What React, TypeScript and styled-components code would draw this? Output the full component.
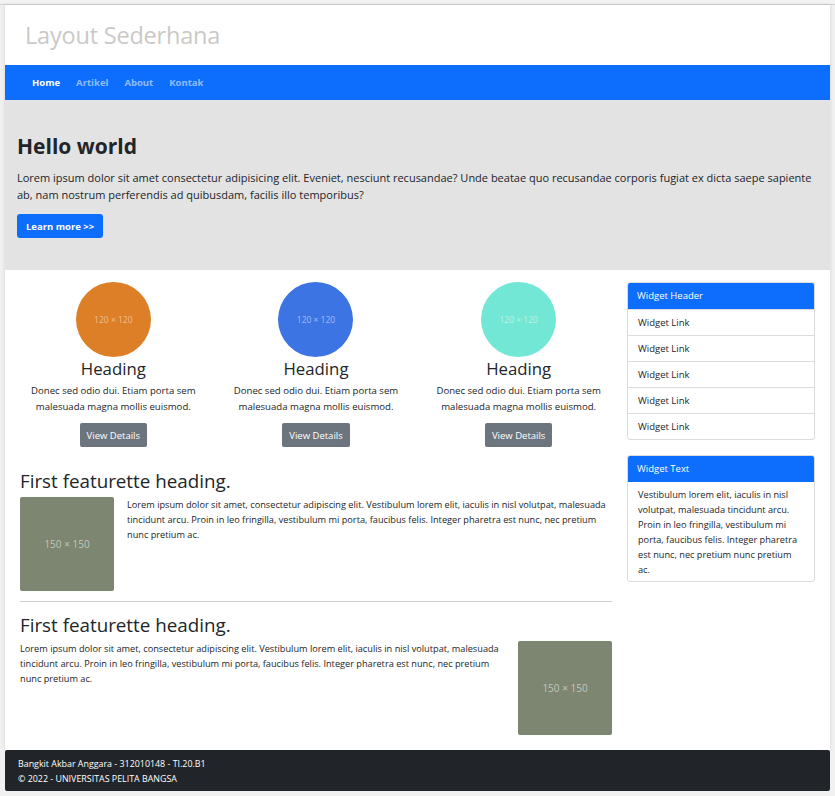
import React from "react";
import styled, { createGlobalStyle } from "styled-components";

const Global = createGlobalStyle`
  html, body { margin: 0; padding: 0; background: #f1f1f1; }
  body { font-family: "Open Sans", "Noto Sans", sans-serif; color: #212529; }
  * { box-sizing: border-box; }
`;

const TopLine = styled.div`
  height: 5px;
  border-bottom: 1px solid #d2d2d2;
  background: #f3f3f3;
`;

const Frame = styled.div`
  margin: 0 5px;
  background: #fff;
  box-shadow: 0 0 4px rgba(0, 0, 0, 0.12);
`;

const Header = styled.header`
  height: 60px;
  display: flex;
  align-items: center;
  padding-left: 20px;
`;

const Title = styled.h1`
  margin: 0;
  font-size: 23.5px;
  font-weight: 400;
  color: #cbc9c7;
  letter-spacing: -0.2px;
`;

const Nav = styled.nav`
  height: 35px;
  background: #0d6efd;
  display: flex;
  align-items: center;
  padding-left: 22px;
`;

const NavLink = styled.a<{ $active?: boolean }>`
  font-size: 9.5px;
  font-weight: 700;
  padding: 0 8px 0 5px;
  margin-right: 3px;
  color: ${(p) => (p.$active ? "#fff" : "rgba(255,255,255,0.55)")};
  text-decoration: none;
`;

const Jumbo = styled.section`
  background: #e3e3e3;
  height: 170px;
  padding: 32px 12px 0;
`;

const JumboTitle = styled.h2`
  margin: 0;
  font-size: 21px;
  font-weight: 700;
  line-height: 28px;
  color: #212529;
`;

const JumboText = styled.p`
  margin: 9px 0 0;
  font-size: 11px;
  line-height: 17px;
  font-weight: 500;
  color: #212529;
`;

const PrimaryButton = styled.button`
  margin-top: 11px;
  background: #0d6efd;
  color: #fff;
  border: none;
  border-radius: 3px;
  height: 24px;
  padding: 0 9px;
  font-family: inherit;
  font-size: 9.5px;
  font-weight: 700;
`;

const Main = styled.div`
  display: flex;
  gap: 15px;
  padding: 12px 15px 15px 15px;
`;

const Content = styled.div`
  width: 592px;
  flex: none;
`;

const Cards = styled.div`
  display: grid;
  grid-template-columns: repeat(3, 1fr);
  margin: 0 -8px;
`;

const Card = styled.div`
  display: flex;
  flex-direction: column;
  align-items: center;
  text-align: center;
`;

const Circle = styled.div<{ $bg: string }>`
  width: 75px;
  height: 75px;
  border-radius: 50%;
  background: ${(p) => p.$bg};
  display: flex;
  align-items: center;
  justify-content: center;
  color: rgba(255, 255, 255, 0.5);
  font-size: 8.5px;
`;

const CardTitle = styled.h3`
  margin: 0;
  font-size: 16.8px;
  font-weight: 400;
  line-height: 23px;
`;

const CardText = styled.p`
  margin: 3px 0 0;
  font-size: 9.6px;
  line-height: 16px;
  padding: 0 14px;
`;

const GrayButton = styled.button`
  margin-top: 8px;
  height: 24px;
  padding: 0 7px;
  background: #6c757d;
  color: #fff;
  border: none;
  border-radius: 2px;
  font-family: inherit;
  font-size: 9.5px;
`;

const Feature = styled.div<{ $withRule?: boolean }>`
  padding-bottom: ${(p) => (p.$withRule ? "10px" : "0")};
  border-bottom: ${(p) => (p.$withRule ? "1px solid #cfcfcf" : "none")};
  margin-top: ${(p) => (p.$withRule ? "22px" : "11px")};
`;

const FeatureTitle = styled.h2`
  margin: 0 0 3px;
  font-size: 18.8px;
  font-weight: 400;
  line-height: 25px;
`;

const FeatureBody = styled.div<{ $reverse?: boolean }>`
  display: flex;
  gap: 13px;
  flex-direction: ${(p) => (p.$reverse ? "row-reverse" : "row")};
  align-items: flex-start;
`;

const Placeholder = styled.div`
  width: 94px;
  height: 94px;
  flex: none;
  background: #7c8670;
  border-radius: 2px;
  color: rgba(255, 255, 255, 0.55);
  font-size: 10px;
  display: flex;
  align-items: center;
  justify-content: center;
`;

const FeatureText = styled.p`
  margin: 0;
  font-size: 9.2px;
  line-height: 15px;
  flex: 1;
`;

const Sidebar = styled.aside`
  width: 188px;
  flex: none;
  display: flex;
  flex-direction: column;
  gap: 15px;
`;

const Widget = styled.div`
  border: 1px solid #dcdcdc;
  border-radius: 3px;
  overflow: hidden;
`;

const WidgetHead = styled.div`
  height: 27px;
  background: #0d6efd;
  color: #fff;
  font-size: 9.5px;
  display: flex;
  align-items: center;
  padding-left: 10px;
  margin: -1px -1px 0;
`;

const WidgetLink = styled.div`
  height: 26px;
  display: flex;
  align-items: center;
  padding-left: 10px;
  font-size: 9.5px;
  border-top: 1px solid #dcdcdc;
  &:first-of-type { border-top: none; }
`;

const WidgetBody = styled.p`
  margin: 0;
  padding: 5px 10px 4px;
  font-size: 9.2px;
  line-height: 15px;
`;

const Footer = styled.footer`
  margin: 0 5px;
  height: 41px;
  background: #212529;
  border-radius: 2px;
  color: #fff;
  font-size: 8.9px;
  line-height: 15px;
  padding: 6px 13px;
`;

const circles = ["#dc7f26", "#3d74e4", "#73e7d5"];

const featureText =
  "Lorem ipsum dolor sit amet, consectetur adipiscing elit. Vestibulum lorem elit, iaculis in nisl volutpat, malesuada tincidunt arcu. Proin in leo fringilla, vestibulum mi porta, faucibus felis. Integer pharetra est nunc, nec pretium nunc pretium ac.";

export default function App() {
  return (
    <>
      <Global />
      <TopLine />
      <Frame>
        <Header>
          <Title>Layout Sederhana</Title>
        </Header>
        <Nav>
          <NavLink $active>Home</NavLink>
          <NavLink>Artikel</NavLink>
          <NavLink>About</NavLink>
          <NavLink>Kontak</NavLink>
        </Nav>
        <Jumbo>
          <JumboTitle>Hello world</JumboTitle>
          <JumboText>
            Lorem ipsum dolor sit amet consectetur adipisicing elit. Eveniet, nesciunt recusandae? Unde beatae quo
            recusandae corporis fugiat ex dicta saepe sapiente ab, nam nostrum perferendis ad quibusdam, facilis illo
            temporibus?
          </JumboText>
          <PrimaryButton>Learn more &gt;&gt;</PrimaryButton>
        </Jumbo>
        <Main>
          <Content>
            <Cards>
              {circles.map((c) => (
                <Card key={c}>
                  <Circle $bg={c}>120 × 120</Circle>
                  <CardTitle>Heading</CardTitle>
                  <CardText>Donec sed odio dui. Etiam porta sem malesuada magna mollis euismod.</CardText>
                  <GrayButton>View Details</GrayButton>
                </Card>
              ))}
            </Cards>
            <Feature $withRule>
              <FeatureTitle>First featurette heading.</FeatureTitle>
              <FeatureBody>
                <Placeholder>150 × 150</Placeholder>
                <FeatureText>{featureText}</FeatureText>
              </FeatureBody>
            </Feature>
            <Feature>
              <FeatureTitle>First featurette heading.</FeatureTitle>
              <FeatureBody $reverse>
                <Placeholder>150 × 150</Placeholder>
                <FeatureText>{featureText}</FeatureText>
              </FeatureBody>
            </Feature>
          </Content>
          <Sidebar>
            <Widget>
              <WidgetHead>Widget Header</WidgetHead>
              {[0, 1, 2, 3, 4].map((i) => (
                <WidgetLink key={i}>Widget Link</WidgetLink>
              ))}
            </Widget>
            <Widget>
              <WidgetHead>Widget Text</WidgetHead>
              <WidgetBody>
                Vestibulum lorem elit, iaculis in nisl volutpat, malesuada tincidunt arcu. Proin in leo fringilla,
                vestibulum mi porta, faucibus felis. Integer pharetra est nunc, nec pretium nunc pretium ac.
              </WidgetBody>
            </Widget>
          </Sidebar>
        </Main>
      </Frame>
      <Footer>
        <div>Bangkit Akbar Anggara - 312010148 - TI.20.B1</div>
        <div>© 2022 - UNIVERSITAS PELITA BANGSA</div>
      </Footer>
    </>
  );
}
